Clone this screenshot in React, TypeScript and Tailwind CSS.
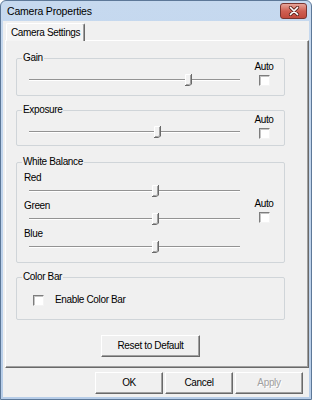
import React from 'react';

// classic win32 bits inside an aero frame
const Checkbox = ({ className = '' }: { className?: string }) => (
  <div
    className={`w-[11px] h-[11px] bg-white border border-t-[#7d7d7d] border-l-[#7d7d7d] border-r-[#f4f4f4] border-b-[#f4f4f4] shadow-[inset_1px_1px_0_#c4c4c4] ${className}`}
  />
);

const Thumb = () => (
  <svg width="7" height="12" viewBox="0 0 7 12" className="block">
    <path d="M0 0 H6 V10 L4 12 H0 Z" fill="#f2f2f2" />
    <path d="M0.5 11.5 V0.5 H5.5" stroke="#ffffff" fill="none" />
    <path d="M6.5 0 V10.2 L4.2 11.5 H0" stroke="#696969" fill="none" />
    <path d="M5.5 1 V9.8 L3.8 10.5 H1" stroke="#a0a0a0" fill="none" />
  </svg>
);

const Slider = ({ value, className = '' }: { value: number; className?: string }) => (
  <div className={`relative w-[211px] h-[12px] flex items-center ${className}`}>
    <div className="w-full h-[2px] border-t border-t-[#939393] border-b border-b-white" />
    <div className="absolute top-0" style={{ left: Math.round(value * 210) - 3 }}>
      <Thumb />
    </div>
  </div>
);

const AutoBox = ({ className = '' }: { className?: string }) => (
  <div className={`ml-[12px] w-[24px] flex flex-col items-center ${className}`}>
    <span className="leading-[12px]">Auto</span>
    <Checkbox className="mt-[2px]" />
  </div>
);

const Group = ({
  title,
  className = '',
  children,
}: {
  title: string;
  className?: string;
  children: React.ReactNode;
}) => (
  <div className={`relative ml-[10px] w-[269px] border border-[#d0d5d9] rounded-[2px] ${className}`}>
    <span className="absolute -top-[7px] left-[5px] px-[1px] bg-[#f0f0f0] leading-[12px]">{title}</span>
    {children}
  </div>
);

const Button = ({
  label,
  disabled = false,
  className = '',
}: {
  label: string;
  disabled?: boolean;
  className?: string;
}) => (
  <div
    className={`h-[22px] flex items-center justify-center bg-[#f0f0f0] border border-t-white border-l-white border-r-[#696969] border-b-[#696969] shadow-[inset_-1px_-1px_0_#a0a0a0] leading-[12px] ${
      disabled ? 'text-[#a0a0a0] [text-shadow:1px_1px_0_#ffffff]' : 'text-black'
    } ${className}`}
  >
    {label}
  </div>
);

const App: React.FC = () => {
  return (
    <div className="w-[312px] h-[400px] flex flex-col bg-gradient-to-b from-[#c6d9ef] to-[#b7cde8] border border-[#5d7898] rounded-t-[6px] font-['Liberation_Sans',Arial,sans-serif] text-[10px] text-black overflow-hidden">
      {/* Title bar */}
      <div className="h-[20px] flex items-start justify-between pl-[6px] pr-[4px]">
        <span className="mt-[4px] leading-[12px] text-[10.5px] tracking-[-0.2px]">Camera Properties</span>
        <div className="mt-[2px] w-[27px] h-[16px] rounded-[3px] border border-[#7a3530] bg-gradient-to-b from-[#e6a59a] via-[#cf5f52] to-[#c24a3c] flex items-center justify-center">
          <svg width="12" height="10" viewBox="0 0 12 10">
            <path d="M2.5 1.5 L9.5 8.5 M9.5 1.5 L2.5 8.5" stroke="#5a2520" strokeWidth="3.2" strokeLinecap="round" />
            <path d="M2.5 1.5 L9.5 8.5 M9.5 1.5 L2.5 8.5" stroke="#ffffff" strokeWidth="1.7" strokeLinecap="round" />
          </svg>
        </div>
      </div>

      {/* Client area */}
      <div className="flex-1 mx-[2px] mb-[2px] bg-[#f0f0f0] flex flex-col tracking-[-0.35px]">
        {/* Tab strip */}
        <div className="h-[19px] flex items-end pl-[3px]">
          <div className="relative z-10 -mb-px w-[79px] h-[18px] bg-[#f4f4f4] border-t border-l border-t-white border-l-white border-r border-r-[#696969] shadow-[inset_-1px_0_0_#a0a0a0] rounded-t-[2px] pl-[4px] pt-[3px] leading-[12px]">
            Camera Settings
          </div>
        </div>

        {/* Tab page */}
        <div className="ml-[2px] w-[304px] h-[328px] border border-t-white border-l-white border-r-[#696969] border-b-[#696969] shadow-[inset_-1px_-1px_0_#a0a0a0] flex flex-col">
          <Group title="Gain" className="mt-[17px] h-[38px]">
            <div className="flex items-start">
              <Slider value={0.757} className="ml-[12px] mt-[15px]" />
              <AutoBox className="mt-[2px]" />
            </div>
          </Group>

          <Group title="Exposure" className="mt-[14px] h-[36px]">
            <div className="flex items-start">
              <Slider value={0.61} className="ml-[12px] mt-[15px]" />
              <AutoBox className="mt-[3px]" />
            </div>
          </Group>

          <Group title="White Balance" className="mt-[16px] h-[101px]">
            <div className="flex items-start">
              <div className="flex flex-col">
                <span className="ml-[7px] mt-[9px] leading-[12px]">Red</span>
                <Slider value={0.6} className="ml-[12px] mt-[1px]" />
                <span className="ml-[7px] mt-[3px] leading-[12px]">Green</span>
                <Slider value={0.6} className="ml-[12px] mt-[1px]" />
                <span className="ml-[7px] mt-[3px] leading-[12px]">Blue</span>
                <Slider value={0.6} className="ml-[12px] mt-[1px]" />
              </div>
              <AutoBox className="mt-[35px]" />
            </div>
          </Group>

          <Group title="Color Bar" className="mt-[14px] h-[43px]">
            <div className="flex items-start">
              <Checkbox className="ml-[16px] mt-[17px]" />
              <span className="ml-[11px] mt-[16px] leading-[12px]">Enable Color Bar</span>
            </div>
          </Group>

          <Button label="Reset to Default" className="ml-[95px] mt-[15px] w-[99px]" />
        </div>

        {/* Dialog buttons */}
        <div className="mt-[4px] pl-[92px] flex gap-[2px]">
          <Button label="OK" className="w-[68px]" />
          <Button label="Cancel" className="w-[68px]" />
          <Button label="Apply" disabled className="w-[68px]" />
        </div>
      </div>
    </div>
  );
};

export default App;
